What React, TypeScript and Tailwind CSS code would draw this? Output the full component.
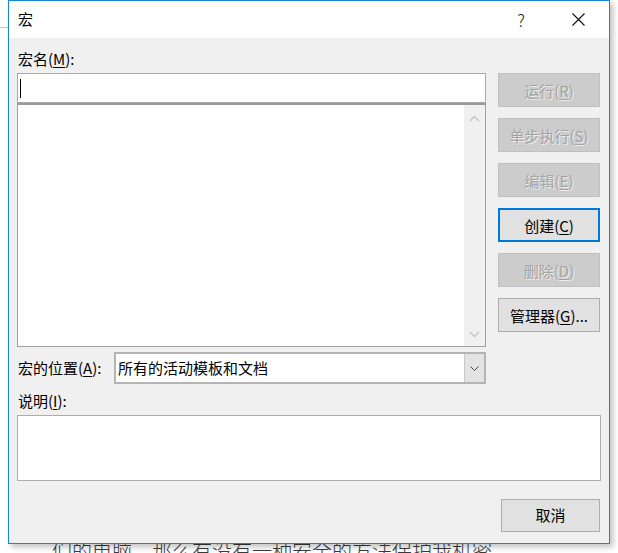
import React from "react";

const font = {
  fontFamily: '"Noto Sans CJK SC", "Liberation Sans", sans-serif',
};

function DlgButton({
  label,
  mnemonic,
  suffix = ")",
  disabled = false,
  focused = false,
}: {
  label: string;
  mnemonic: string;
  suffix?: string;
  disabled?: boolean;
  focused?: boolean;
}) {
  const base =
    "flex h-[34px] w-[102px] items-center justify-center text-[15px] leading-none";
  const look = disabled
    ? "border border-[#bfbfbf] bg-[#cccccc] text-[#a3a3a3] [text-shadow:1px_1px_0_#ececec]"
    : focused
      ? "border-2 border-[#0078d7] bg-[#e1e1e1] text-black"
      : "border border-[#adadad] bg-[#e1e1e1] text-black";
  return (
    <div className={`${base} ${look}`}>
      <span>
        {label}(<u className="underline-offset-2">{mnemonic}</u>
        {suffix}
      </span>
    </div>
  );
}

function Chevron({ up = false, color }: { up?: boolean; color: string }) {
  return (
    <svg width="11" height="7" viewBox="0 0 11 7">
      <path
        d={up ? "M1 6 L5.5 1.5 L10 6" : "M1 1 L5.5 5.5 L10 1"}
        fill="none"
        stroke={color}
        strokeWidth="1.3"
      />
    </svg>
  );
}

export default function App() {
  return (
    <div
      className="relative h-[553px] w-[618px] overflow-hidden bg-white text-black"
      style={font}
    >
      {/* page behind the dialog */}
      <div className="absolute left-0 top-[27px] h-px w-[8px] bg-[#c6c6c6]" />
      <div className="absolute left-[52px] top-[537px] whitespace-nowrap text-[20px] leading-[28px] font-light text-[#3a3a3a]">
        们的电脑。那么有没有一种安全的方法保护我机密
      </div>

      {/* dialog */}
      <div className="relative z-10 ml-[8px] flex h-[544px] w-[602px] flex-col border border-[#1883d7] bg-[#f0f0f0] shadow-[3px_3px_6px_rgba(0,0,0,0.25)]">
        {/* title bar */}
        <div className="flex h-[37px] items-center bg-white pl-[9px] text-[15px]">
          <span>宏</span>
          <span className="ml-auto mr-[47px] text-[17px] font-light text-[#222]">?</span>
          <svg width="13" height="13" viewBox="0 0 13 13" className="mr-[24px]">
            <path d="M0.5 0.5 L12.5 12.5 M12.5 0.5 L0.5 12.5" stroke="#111" strokeWidth="1.1" />
          </svg>
        </div>

        {/* body */}
        <div className="flex flex-col pl-[8px] pr-[8px]">
          <div className="flex gap-[12px]">
            {/* left column */}
            <div className="flex w-[469px] flex-col">
              <div className="mt-[11px] h-[20px] pl-[1px] text-[15px] leading-[20px]">
                宏名(<u className="underline-offset-2">M</u>):
              </div>
              <div className="mt-[4px] flex h-[30px] items-center border border-[#a9a9a9] bg-white">
                <div className="ml-[2px] h-[19px] w-px bg-black" />
              </div>
              <div className="flex h-[244px] border border-t-2 border-[#a0a0a0] border-t-[#9a9a9a] bg-white">
                <div className="flex-1" />
                <div className="flex w-[21px] flex-col items-center justify-between bg-[#f0f0f0] pb-[8px] pt-[10px]">
                  <Chevron up color="#c2c2c2" />
                  <Chevron color="#c2c2c2" />
                </div>
              </div>
            </div>

            {/* right column */}
            <div className="flex flex-col gap-[11px] pt-[35px]">
              <DlgButton label="运行" mnemonic="R" disabled />
              <DlgButton label="单步执行" mnemonic="S" disabled />
              <DlgButton label="编辑" mnemonic="E" disabled />
              <DlgButton label="创建" mnemonic="C" focused />
              <DlgButton label="删除" mnemonic="D" disabled />
              <DlgButton label="管理器" mnemonic="G" suffix=")..." />
            </div>
          </div>

          {/* macro location */}
          <div className="mt-[5px] flex h-[32px] w-[469px] items-center">
            <div className="w-[97px] pl-[1px] text-[15px]">
              宏的位置(<u className="underline-offset-2">A</u>):
            </div>
            <div className="flex h-[32px] flex-1 items-stretch border-2 border-[#b4b4b4] bg-white">
              <div className="flex flex-1 items-center pl-[2px] text-[15px]">
                所有的活动模板和文档
              </div>
              <div className="flex w-[20px] items-center justify-center border-l border-[#c8c8c8] bg-[#e3e3e3]">
                <svg width="9" height="5" viewBox="0 0 9 5">
                  <path d="M0.5 0.5 L4.5 4.5 L8.5 0.5" fill="none" stroke="#444" strokeWidth="1" />
                </svg>
              </div>
            </div>
          </div>

          {/* description */}
          <div className="mt-[7px] h-[20px] pl-[1px] text-[15px] leading-[20px]">
            说明(<u className="underline-offset-2">I</u>):
          </div>
          <div className="mt-[4px] h-[66px] w-[584px] border border-[#adadad] bg-white" />

          <div className="mt-[18px] flex justify-end pr-[1px]">
            <div className="flex h-[33px] w-[99px] items-center justify-center border border-[#adadad] bg-[#e1e1e1] text-[15px]">
              取消
            </div>
          </div>
        </div>
      </div>
    </div>
  );
}
